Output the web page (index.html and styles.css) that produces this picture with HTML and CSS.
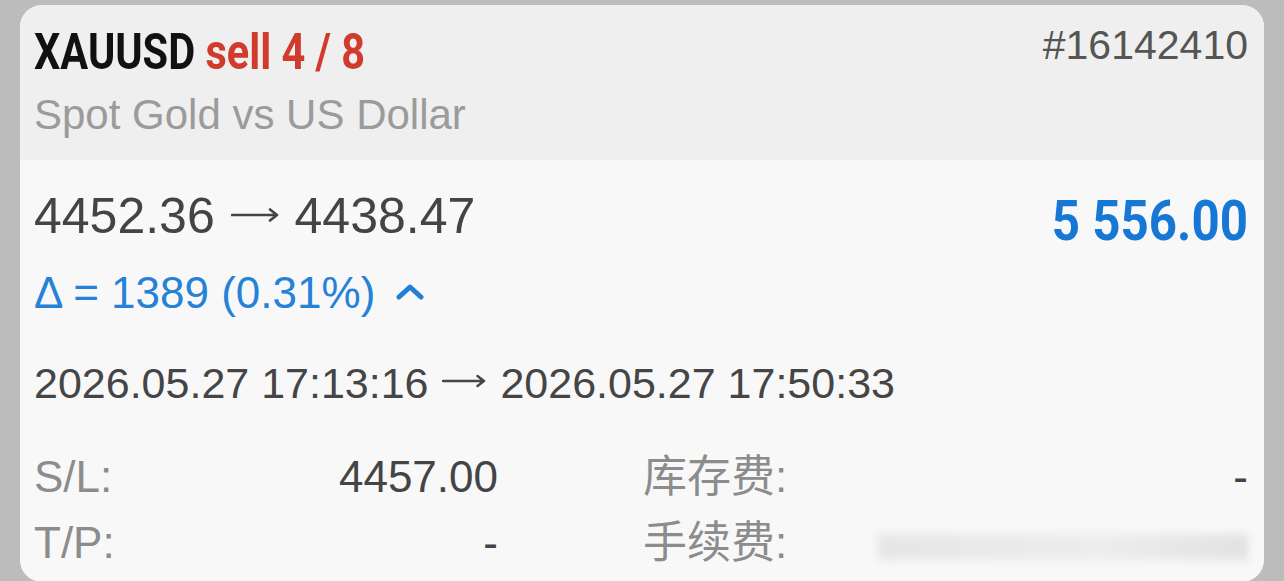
FILE: index.html
```html
<!DOCTYPE html>
<html lang="en">
<head>
    <meta charset="UTF-8">
    <meta name="viewport" content="width=device-width, initial-scale=1.0">
    <title>Deal XAUUSD</title>
    <link rel="stylesheet" href="styles.css">
</head>
<body>
    <div class="page">
        <div class="deal">
            <div class="deal-head">
                <div class="head-left">
                    <div class="title">XAUUSD <span class="side">sell 4 / 8</span></div>
                    <div class="desc">Spot Gold vs US Dollar</div>
                </div>
                <div class="ticket">#16142410</div>
            </div>

            <div class="deal-body">
                <div class="price-row">
                    <div class="prices">4452.36
                        <svg class="arrow" width="48" height="14" viewBox="0 0 48 14"><path d="M1 7H46M39 1.5L46 7L39 12.5" fill="none" stroke="#444" stroke-width="2.6" stroke-linecap="round" stroke-linejoin="round"/></svg>
                        4438.47</div>
                    <div class="profit">5 556.00</div>
                </div>
                <div class="delta">
                    &Delta; = 1389 (0.31%)
                    <svg class="chevron" width="28" height="16" viewBox="0 0 28 16">
                        <polyline points="3,13 14,3 25,13" fill="none" stroke="#1f7fd6" stroke-width="5" stroke-linecap="round" stroke-linejoin="round"/>
                    </svg>
                </div>
                <div class="times">2026.05.27 17:13:16
                    <svg class="arrow small" width="44" height="14" viewBox="0 0 44 14"><path d="M1 7H42M35.5 2L42 7L35.5 12" fill="none" stroke="#454545" stroke-width="2.4" stroke-linecap="round" stroke-linejoin="round"/></svg>
                    2026.05.27 17:50:33</div>

                <div class="details">
                    <div class="pair"><span class="label">S/L:</span><span class="value">4457.00</span></div>
                    <div class="pair"><span class="label">库存费:</span><span class="value">-</span></div>
                    <div class="pair"><span class="label">T/P:</span><span class="value">-</span></div>
                    <div class="pair"><span class="label">手续费:</span><span class="value"><span class="hidden-value"></span></span></div>
                </div>
            </div>
        </div>
    </div>
</body>
</html>
```

FILE: styles.css
```css
body {
    margin: 0;
    background: #bcbcbc;
    font-family: "Liberation Sans", Arial, "Noto Sans CJK SC", sans-serif;
}
.page {
    padding: 5px 20px 0 20px;
    height: 576px;
    overflow: hidden;
}
.deal {
    background: #f8f8f8;
    border-radius: 22px;
    overflow: hidden;
}
.deal-head {
    background: #efefef;
    display: flex;
    justify-content: space-between;
    padding: 15px 16px 14px 14px;
}
.title {
    font-family: Roboto, "Liberation Sans", sans-serif;
    font-weight: bold;
    font-size: 50px;
    line-height: 64px;
    color: #111;
    transform: scaleX(0.83);
    transform-origin: left center;
    white-space: nowrap;
}
.side {
    color: #d13b2c;
}
.desc {
    font-size: 42px;
    line-height: 62px;
    color: #9b9b9b;
}
.ticket {
    margin-top: 5px;
    font-size: 41px;
    line-height: 40px;
    color: #555;
}
.deal-body {
    padding: 26px 16px 6px 14px;
}
.price-row {
    display: flex;
    justify-content: space-between;
    align-items: flex-start;
}
.prices {
    font-size: 50px;
    line-height: 60px;
    color: #444;
}
.arrow {
    margin: 0 2px;
    vertical-align: 11px;
}
.arrow.small {
    vertical-align: 10px;
}
.profit {
    margin-top: 5px;
    font-family: Roboto, "Liberation Sans", sans-serif;
    font-weight: bold;
    font-size: 56px;
    line-height: 60px;
    color: #1677d5;
    transform: scaleX(0.88);
    transform-origin: right center;
    white-space: nowrap;
}
.delta {
    font-size: 44px;
    line-height: 84px;
    color: #2582d6;
}
.chevron {
    margin-left: 8px;
    vertical-align: 8px;
}
.times {
    margin-top: 20px;
    font-size: 43px;
    line-height: 56px;
    color: #454545;
}
.details {
    margin-top: 33px;
    display: grid;
    grid-template-columns: 464px 1fr;
    column-gap: 145px;
}
.pair {
    display: flex;
    justify-content: space-between;
    font-size: 44px;
    line-height: 66px;
}
.label {
    color: #8c8c8c;
}
.value {
    color: #444;
}
.hidden-value {
    display: inline-block;
    width: 370px;
    height: 26px;
    background: linear-gradient(90deg, #e6e6e6, #ededed 60%, #e2e2e2);
    filter: blur(4px);
    vertical-align: -2px;
}
```
